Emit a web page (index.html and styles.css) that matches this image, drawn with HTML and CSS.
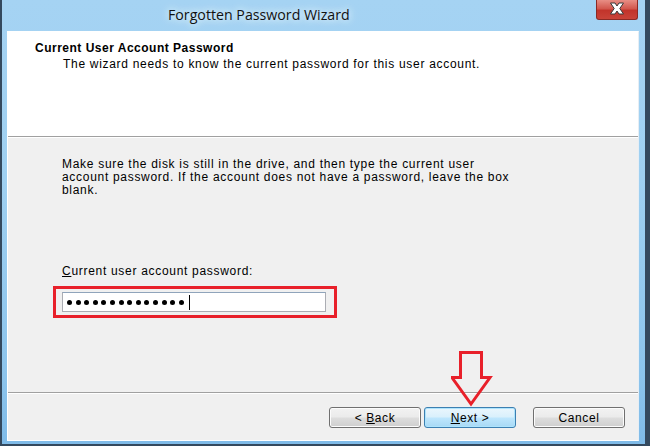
FILE: index.html
```html
<!DOCTYPE html>
<html>
<head>
<meta charset="utf-8">
<link rel="stylesheet" href="styles.css">
</head>
<body>
<div class="window">
  <div class="titlebar">
    <div class="title">Forgotten Password Wizard</div>
    <div class="close">
      <svg width="42" height="20" viewBox="0 0 42 20">
        <path d="M14.5 4 L19 4 L21 7 L23 4 L27.5 4 L23.8 9.5 L27.5 15 L23 15 L21 12 L19 15 L14.5 15 L18.2 9.5 Z" fill="#ffffff" stroke="#3a3a3a" stroke-width="1" stroke-linejoin="miter"/>
      </svg>
    </div>
  </div>
  <div class="content">
    <div class="header">
      <div class="heading">Current User Account Password</div>
      <div class="subheading">The wizard needs to know the current password for this user account.</div>
    </div>
    <div class="body">
      <p class="info">Make sure the disk is still in the drive, and then type the current user account password. If the account does not have a password, leave the box blank.</p>
      <div class="label"><u>C</u>urrent user account password:</div>
      <div class="highlight">
        <div class="input">
          <span class="dot"></span><span class="dot"></span><span class="dot"></span><span class="dot"></span><span class="dot"></span><span class="dot"></span><span class="dot"></span><span class="dot"></span><span class="dot"></span><span class="dot"></span><span class="dot"></span><span class="dot"></span><span class="dot"></span><span class="dot"></span><span class="caret"></span>
        </div>
      </div>
      <svg class="arrow" width="42" height="56" viewBox="0 0 42 56">
        <path d="M9.5 1.5 L30.5 1.5 L30.5 26.5 L39 26.5 L20 53 L1 26.5 L9.5 26.5 Z" fill="none" stroke="#e8202a" stroke-width="3" stroke-linejoin="miter"/>
      </svg>
    </div>
    <div class="footer">
      <button class="btn back">&lt; <u>B</u>ack</button>
      <button class="btn next"><u>N</u>ext &gt;</button>
      <button class="btn cancel">Cancel</button>
    </div>
  </div>
</div>
</body>
</html>
```
FILE: styles.css
```css
html, body {
  margin: 0;
  padding: 0;
}
body {
  width: 650px;
  height: 446px;
  background: #34495e;
  padding: 0 5px 2px 2px;
  box-sizing: border-box;
  overflow: hidden;
}
.window {
  height: 444px;
  background: linear-gradient(180deg, #a5d3f3 0%, #9fd0f1 40%, #8cc4ec 85%, #7fbbe8 100%);
  padding: 0 6px 3px 5px;
  box-sizing: border-box;
  display: flex;
  flex-direction: column;
}
.titlebar {
  height: 31px;
  display: flex;
  align-items: flex-start;
  flex: none;
}
.title {
  flex: 1;
  font-family: "Open Sans", "Noto Sans", sans-serif;
  font-size: 14.2px;
  color: #111;
  padding-top: 5px;
  padding-left: 161px;
  text-shadow: 0 0 6px #e6f4ff, 0 0 10px #e6f4ff;
}
.close {
  width: 42px;
  height: 20px;
  margin-right: 1px;
  background: linear-gradient(180deg, #e88e85 0%, #d2584e 45%, #c2342b 55%, #c94338 100%);
  border: 1px solid #8a2a25;
  border-top: none;
  box-sizing: border-box;
  border-radius: 0 0 3px 3px;
}
.close svg {
  display: block;
  margin: -1px 0 0 -1px;
}
.content {
  flex: 1;
  background: #f0f0f0;
  border: 1px solid #ffffff;
  border-right-color: #e6eef5;
  display: flex;
  flex-direction: column;
  font-family: "Liberation Sans", Arial, sans-serif;
  font-size: 12px;
  letter-spacing: 0.7px;
  color: #000;
}
.header {
  background: #ffffff;
  height: 105px;
  border-bottom: 1px solid #a0a0a0;
  box-shadow: 0 1px 0 #ffffff;
  padding: 9px 0 0 27px;
  box-sizing: border-box;
  flex: none;
}
.heading {
  font-weight: bold;
  line-height: 14px;
  letter-spacing: 0.5px;
}
.subheading {
  line-height: 14px;
  margin-top: 2px;
  padding-left: 28px;
}
.body {
  flex: 1;
  position: relative;
  padding: 21px 0 0 54px;
  border-bottom: 1px solid #a0a0a0;
  box-shadow: 0 1px 0 #ffffff;
}
.info {
  margin: 0;
  width: 456px;
  line-height: 13px;
}
.label {
  margin-top: 67px;
  line-height: 14px;
}
.highlight {
  margin: 8px 0 0 -9px;
  width: 284px;
  height: 32px;
  border: 3px solid #e8202a;
  box-sizing: border-box;
  padding: 3px 8px 3px 6px;
}
.input {
  height: 20px;
  background: #fff;
  border: 1px solid #abadb3;
  border-top-color: #8fa4bb;
  box-sizing: border-box;
  display: flex;
  align-items: center;
  gap: 3.6px;
  padding-left: 4px;
}
.dot {
  width: 5px;
  height: 5px;
  border-radius: 50%;
  background: #000;
}
.caret {
  width: 1px;
  height: 15px;
  background: #000;
  margin-left: 2px;
}
.arrow {
  position: absolute;
  left: 443px;
  top: 214px;
}
.footer {
  height: 47px;
  flex: none;
  display: flex;
  justify-content: flex-end;
  align-items: flex-start;
  padding: 14px 13px 0 0;
  box-sizing: border-box;
}
.btn {
  width: 92px;
  height: 21px;
  margin: 0;
  padding: 0;
  font-family: "Liberation Sans", Arial, sans-serif;
  font-size: 12px;
  letter-spacing: 0.6px;
  color: #000;
  border: 1px solid #707070;
  border-radius: 3px;
  background: linear-gradient(180deg, #f2f2f2 0%, #ebebeb 48%, #dddddd 52%, #cfcfcf 100%);
  box-shadow: inset 0 0 0 1px #fcfcfc;
}
.back {
  margin-right: 3px;
}
.next {
  margin-right: 17px;
  border-color: #3c7fb1;
  background: linear-gradient(180deg, #eaf6fd 0%, #d9f0fc 48%, #bee6fd 52%, #a7d9f5 100%);
  box-shadow: inset 0 0 0 1px #aee4fd;
}
```
